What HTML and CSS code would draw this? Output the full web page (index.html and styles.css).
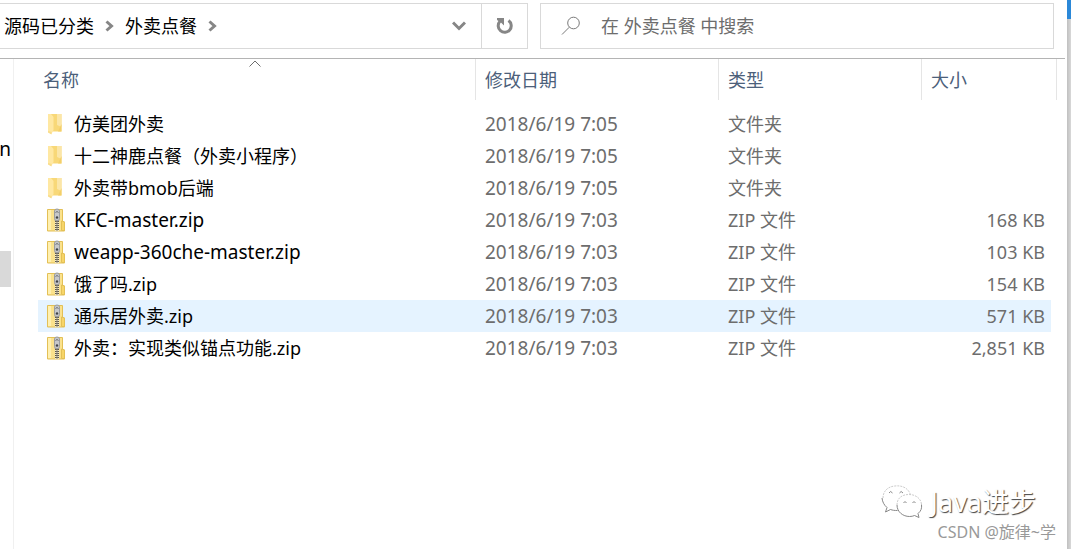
FILE: index.html
```html
<!DOCTYPE html>
<html lang="zh-CN">
<head>
    <meta charset="UTF-8">
    <meta name="viewport" content="width=device-width, initial-scale=1.0">
    <title>外卖点餐</title>
    <link rel="stylesheet" href="styles.css">
</head>
<body>
    <svg width="0" height="0" class="defs">
        <symbol id="folder" viewBox="0 0 20 24">
            <path d="M5 2h10.500v17.500H5z" fill="#f8d878"/>
            <path d="M11 2h4.500v13L11 13z" fill="#fbe6a8"/>
            <path d="M15.500 12v7.500H12z" fill="#f3cf6a"/>
            <path d="M2 2h3l2.500 3v13L5.500 22 2 20z" fill="#ffe8a2"/>
            <path d="M2 19l3.500 1v2.500L2 20.500z" fill="#f9dc8a"/>
        </symbol>
        <symbol id="zip" viewBox="0 0 20 24">
            <path d="M1.500 1.500h15V13l2 1v9h-17z" fill="#fbe28c" stroke="#e3c056"/>
            <path d="M2 2h3v20H2z" fill="#fff0b0"/>
            <path d="M15.500 13l3 1v8.500h-3z" fill="#f7d568" stroke="#e3c056"/>
            <path d="M9 13h4v10H9z" fill="#f4e9c4"/>
            <path d="M11 13v10" stroke="#5d594e" stroke-width="4" stroke-dasharray="1 1"/>
            <path d="M11 13v10" stroke="#8d8878"/>
            <path d="M8.500 3q0-2 2.500-2t2.500 2v6l-.5 3.500H9L8.500 9z" fill="#c6c7c9" stroke="#9a9c9f"/>
            <path d="M9.500 4.500q1.500-2 3 0" fill="none" stroke="#6a6d71"/>
            <circle cx="11" cy="9.500" r="1.200" fill="#3f4246"/>
        </symbol>
    </svg>

    <div class="window">
        <header class="toolbar">
            <div class="address">
                <nav class="crumbs">
                    <a href="#">源码已分类</a>
                    <svg width="9" height="12" viewBox="0 0 9 12"><path d="M1.500 1.500L6.500 6l-5 4.500"/></svg>
                    <a href="#">外卖点餐</a>
                    <svg width="9" height="12" viewBox="0 0 9 12"><path d="M1.500 1.500L6.500 6l-5 4.500"/></svg>
                </nav>
                <button class="history" aria-label="以前的位置">
                    <svg width="14" height="10" viewBox="0 0 14 10"><path d="M1 1.500l6 6 6-6"/></svg>
                </button>
                <button class="refresh" aria-label="刷新">
                    <svg width="18" height="18" viewBox="0 0 18 18">
                        <path d="M12.500 3.500a6.500 6.500 0 1 1-8.500.8"/>
                        <path class="tip" d="M1 1h7v7.500L5.500 6 1 3z"/>
                    </svg>
                </button>
            </div>
            <div class="search">
                <label for="search" aria-label="搜索">
                    <svg width="20" height="20" viewBox="0 0 20 20">
                        <circle cx="12.500" cy="7" r="5.800"/>
                        <path d="M8.300 11.200L1 18.500"/>
                    </svg>
                </label>
                <input id="search" type="text" placeholder="在 外卖点餐 中搜索">
            </div>
        </header>

        <div class="content">
            <aside class="sidebar">
                <a class="tree-item" href="#">n</a>
                <div class="tree-selected"></div>
            </aside>
            <main class="list">
                <table class="files">
                    <colgroup>
                        <col>
                        <col class="col-date">
                        <col class="col-type">
                        <col class="col-size">
                    </colgroup>
                    <thead>
                        <tr>
                            <th class="sorted">名称
                                <svg width="12" height="7" viewBox="0 0 12 7"><path d="M.5 6.500L6 1l5.500 5.500"/></svg>
                            </th>
                            <th>修改日期</th>
                            <th>类型</th>
                            <th>大小</th>
                        </tr>
                    </thead>
                    <tbody>
                        <tr>
                            <td><div class="name"><svg><use href="#folder"/></svg>仿美团外卖</div></td>
                            <td>2018/6/19 7:05</td>
                            <td>文件夹</td>
                            <td></td>
                        </tr>
                        <tr>
                            <td><div class="name"><svg><use href="#folder"/></svg>十二神鹿点餐（外卖小程序）</div></td>
                            <td>2018/6/19 7:05</td>
                            <td>文件夹</td>
                            <td></td>
                        </tr>
                        <tr>
                            <td><div class="name"><svg><use href="#folder"/></svg>外卖带bmob后端</div></td>
                            <td>2018/6/19 7:05</td>
                            <td>文件夹</td>
                            <td></td>
                        </tr>
                        <tr>
                            <td><div class="name latin"><svg><use href="#zip"/></svg>KFC-master.zip</div></td>
                            <td>2018/6/19 7:03</td>
                            <td>ZIP 文件</td>
                            <td>168 KB</td>
                        </tr>
                        <tr>
                            <td><div class="name latin"><svg><use href="#zip"/></svg>weapp-360che-master.zip</div></td>
                            <td>2018/6/19 7:03</td>
                            <td>ZIP 文件</td>
                            <td>103 KB</td>
                        </tr>
                        <tr>
                            <td><div class="name"><svg><use href="#zip"/></svg>饿了吗.zip</div></td>
                            <td>2018/6/19 7:03</td>
                            <td>ZIP 文件</td>
                            <td>154 KB</td>
                        </tr>
                        <tr class="hover">
                            <td><div class="name"><svg><use href="#zip"/></svg>通乐居外卖.zip</div></td>
                            <td>2018/6/19 7:03</td>
                            <td>ZIP 文件</td>
                            <td>571 KB</td>
                        </tr>
                        <tr>
                            <td><div class="name"><svg><use href="#zip"/></svg>外卖：实现类似锚点功能.zip</div></td>
                            <td>2018/6/19 7:03</td>
                            <td>ZIP 文件</td>
                            <td>2,851 KB</td>
                        </tr>
                    </tbody>
                </table>
            </main>
        </div>
    </div>
    <div class="edge"></div>

    <div class="watermark">
        <div class="account">
            <svg width="42" height="36" viewBox="0 0 42 36">
                <path class="faint" d="M2 14C2 7 7 2.500 14 2c8-1 14 3 15.500 9"/>
                <path d="M1 14c.5 4 2 7 5 9.500L4.500 28l5-2.500c2 .8 4 1 7 1"/>
                <path class="faint" d="M16 21c0-7 5-10.500 12-10.500S40.500 15 40.500 21"/>
                <path d="M16 21c0 7 6 11.500 12.500 11.500 2 0 3.500-.3 5-1l4.500 2-1-4c3-2.500 4-5 3.500-9"/>
                <path d="M8 9q1.500-3 3.500 0M18.500 9q1.500-3 3.500 0M22.500 19q1.500-3 3 0M31.500 19q1.500-3 3 0"/>
            </svg>
            <span>Java进步</span>
        </div>
        <div class="credit">CSDN @旋律~学</div>
    </div>
</body>
</html>
```
FILE: styles.css
```css
* {
    box-sizing: border-box;
}

body {
    margin: 0;
    min-height: 100vh;
    display: flex;
    position: relative;
    overflow: hidden;
    background: #fff;
    color: #000;
    font-family: "Noto Sans", "Noto Sans CJK SC", sans-serif;
    font-size: 18px;
    line-height: 24px;
}

a {
    color: inherit;
    text-decoration: none;
}

button {
    padding: 0;
    border: none;
    background: none;
    cursor: pointer;
}

svg {
    flex: none;
    fill: none;
}

.defs {
    position: absolute;
}

.window {
    flex: 1;
    min-width: 0;
    display: flex;
    flex-direction: column;
}

/* 地址栏 */
.toolbar {
    display: flex;
    gap: 12px;
    margin-right: 2px;
    padding: 3px 11px 9px 0;
    border-bottom: 1px solid #b4b4b4;
}

.address {
    flex: 1;
    display: flex;
    height: 46px;
    border: 1px solid #d9d9d9;
    border-left: none;
}

.crumbs {
    flex: 1;
    display: flex;
    align-items: center;
    gap: 11px;
    padding-left: 4px;
}

.crumbs svg,
.history svg,
.refresh svg {
    stroke: #868686;
    stroke-width: 3;
}

.history {
    width: 44px;
}

.refresh {
    width: 46px;
    border-left: 1px solid #d9d9d9;
}

.history svg,
.refresh svg {
    display: block;
    margin: 0 auto;
}

.refresh .tip {
    fill: #868686;
    stroke: none;
}

.search {
    width: 514px;
    height: 46px;
    display: flex;
    align-items: center;
    gap: 20px;
    padding-left: 20px;
    border: 1px solid #d9d9d9;
}

.search svg {
    display: block;
    stroke: #7a7a7a;
}

.search input {
    flex: 1;
    min-width: 0;
    padding: 0;
    border: none;
    outline: none;
    font: inherit;
}

.search input::placeholder {
    color: #6d6d6d;
    opacity: 1;
}

/* 左侧目录 */
.content {
    flex: 1;
    display: flex;
}

.sidebar {
    width: 14px;
    padding: 78px 2px 0 0;
    border-right: 1px solid #f0f0f0;
}

.tree-item {
    display: flex;
    justify-content: flex-end;
    font-size: 19px;
}

.tree-selected {
    height: 36px;
    margin-top: 90px;
    background: #d9d9d9;
}

/* 文件列表 */
.list {
    flex: 1;
    padding: 0 10px 0 24px;
}

.files {
    width: 100%;
    table-layout: fixed;
    border-spacing: 0;
}

.col-date {
    width: 243px;
}

.col-type {
    width: 203px;
}

.col-size {
    width: 135px;
}

th {
    position: relative;
    height: 41px;
    padding: 0 9px;
    border-right: 1px solid #e5e5e5;
    color: #4c607a;
    font-weight: 400;
    text-align: left;
}

th.sorted {
    padding-left: 5px;
}

.sorted svg {
    position: absolute;
    top: 1px;
    left: 50%;
    margin-left: -8px;
    stroke: #6d6d6d;
}

tbody::before {
    content: "";
    display: block;
    height: 8px;
}

td {
    height: 32px;
    padding: 0 9px;
    color: #6d6d6d;
    white-space: nowrap;
}

td:first-child {
    padding: 0 8px;
    color: #000;
}

td:last-child {
    padding-right: 6px;
    border-right: 6px solid transparent;
    background-clip: padding-box;
    text-align: right;
}

td:nth-child(2),
.latin {
    font-size: 19px;
}

.name {
    display: flex;
    align-items: center;
    gap: 8px;
}

.name svg {
    width: 20px;
    height: 24px;
}

.hover td {
    background-color: #e5f3ff;
}

.edge {
    width: 4px;
    border-top: 19px solid #2b88d8;
    background: linear-gradient(90deg, #c0c0c0, #d8d8d8);
}

/* 水印 */
.watermark {
    position: absolute;
    right: 15px;
    bottom: 5px;
    text-align: right;
}

.account {
    display: flex;
    align-items: center;
    justify-content: flex-end;
    gap: 8px;
    margin-right: 20px;
    color: #fff;
    font-size: 27px;
    line-height: 36px;
    text-shadow: 1px 1px 1px #444;
}

.account svg {
    stroke: #888;
}

.account .faint {
    stroke: #ccc;
    stroke-dasharray: 2 1;
}

.credit {
    color: #999;
    font-size: 16px;
}
```
